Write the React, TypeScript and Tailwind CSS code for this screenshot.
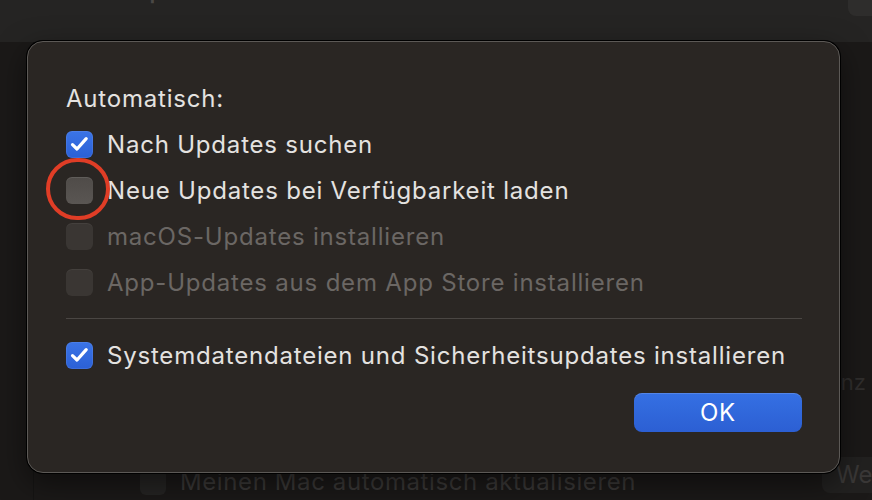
import React, { FC } from "react";

const Check: FC = () => (
  <svg width="19" height="16" viewBox="0 0 19 16" fill="none">
    <path
      d="M2.5 8.6 L7 13 L16.2 2.6"
      stroke="white"
      strokeWidth="3.2"
      strokeLinecap="round"
      strokeLinejoin="round"
    />
  </svg>
);

const Box: FC<{ checked?: boolean; disabled?: boolean }> = ({ checked, disabled }) => {
  if (checked) {
    return (
      <div className="w-[27px] h-[27px] rounded-[6px] bg-gradient-to-b from-[#3b74e6] to-[#2b60d6] shadow-[inset_0_0_0_1px_rgba(255,255,255,0.08)] flex items-center justify-center shrink-0">
        <Check />
      </div>
    );
  }
  return (
    <div
      className={
        disabled
          ? "w-[27px] h-[27px] rounded-[6px] bg-[#3a3633] shadow-[inset_0_1px_0_rgba(255,255,255,0.05)] shrink-0"
          : "w-[27px] h-[27px] rounded-[6px] bg-gradient-to-b from-[#4f4b48] to-[#5a5653] shadow-[inset_0_1px_0_rgba(255,255,255,0.1)] shrink-0"
      }
    />
  );
};

const Row: FC<{ label: string; checked?: boolean; disabled?: boolean }> = ({
  label,
  checked,
  disabled,
}) => (
  <div className="h-[46px] flex items-center gap-[14px]">
    <Box checked={checked} disabled={disabled} />
    <span className={disabled ? "text-[#6b6764] pt-[2px]" : "text-[#e4e2e0] pt-[2px]"}>{label}</span>
  </div>
);

export default function App() {
  return (
    <div
      className="relative w-[872px] h-[500px] overflow-hidden bg-[#1b1918]"
      style={{ fontFamily: "Inter, 'Noto Sans', sans-serif" }}
    >
      {/* window behind */}
      <div className="h-[42px] bg-[#252423] relative">
        <div className="absolute left-[40px] -top-[25px] text-[22px] text-[#4a4846] font-semibold">
          Softwareupdate
        </div>
        <div className="absolute right-[-20px] -top-[12px] w-[44px] h-[28px] rounded-[8px] bg-[#2e2d2c]" />
      </div>
      <div className="absolute left-[33px] top-[42px] bottom-0 w-px bg-[#151413]" />
      <div className="absolute left-[140px] top-[464px] flex items-center gap-[14px] text-[24px] tracking-[0.6px] text-[#3a3837]">
        <div className="w-[26px] h-[26px] rounded-[6px] bg-[#252423]" />
        <span>Meinen Mac automatisch aktualisieren</span>
      </div>
      <div className="absolute left-[828px] top-[366px] text-[22px] text-[#302e2d]">enz</div>
      <div className="absolute left-[822px] top-[457px] w-[80px] h-[36px] rounded-[8px] bg-[#222120] text-[24px] text-[#3a3837] pl-[14px] leading-[36px]">
        We
      </div>

      {/* dialog */}
      <div className="absolute left-[27px] top-[41px] w-[813px] h-[432px] rounded-[16px] bg-[#2a2623] border border-[#5c5956] shadow-[0_0_0_1px_#000,0_10px_30px_rgba(0,0,0,0.5)] pl-[38px] pr-[37px] pt-[43px] text-[24px] tracking-[0.8px]">
        <div className="h-[28px] leading-[28px] text-[#e4e2e0]">Automatisch:</div>
        <div className="mt-[8px] flex flex-col">
          <Row label="Nach Updates suchen" checked />
          <div className="relative">
            <Row label="Neue Updates bei Verfügbarkeit laden" />
            <div className="absolute left-[-20px] top-[-9px] w-[64px] h-[62px] rounded-full border-4 border-[#e03d26]" />
          </div>
          <Row label="macOS-Updates installieren" disabled />
          <Row label="App-Updates aus dem App Store installieren" disabled />
        </div>
        <div className="mt-[13px] h-px bg-[#4a4643]" />
        <div className="mt-[13px]">
          <Row label="Systemdatendateien und Sicherheitsupdates installieren" checked />
        </div>
        <div className="mt-[15px] flex justify-end">
          <button className="w-[168px] h-[39px] rounded-[8px] bg-gradient-to-b from-[#3570e3] to-[#2c5fd3] shadow-[inset_0_1px_0_rgba(255,255,255,0.15)] text-white text-[24px]">
            OK
          </button>
        </div>
      </div>
    </div>
  );
}
